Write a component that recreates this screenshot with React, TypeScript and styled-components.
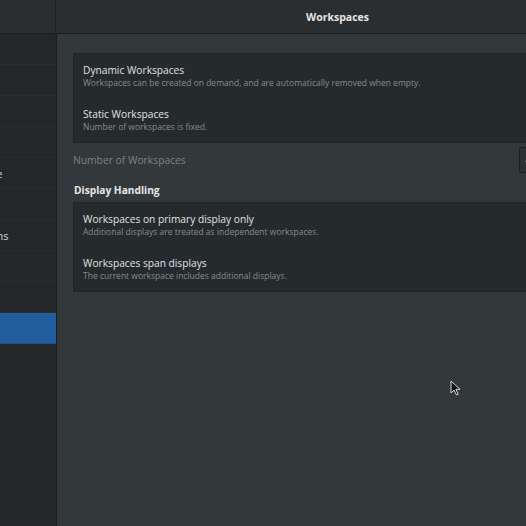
import styled, { createGlobalStyle } from "styled-components";

const GlobalStyle = createGlobalStyle`
  html, body {
    margin: 0;
    padding: 0;
    background-color: #33393b;
    overflow: hidden;
  }
  body {
    font-family: "Open Sans", "Noto Sans", sans-serif;
  }
`;

const Viewport = styled.div`
  position: relative;
  width: 526px;
  height: 526px;
  overflow: hidden;
`;

const Window = styled.div`
  width: 733px;
  height: 526px;
  margin-left: -114px;
  display: flex;
  flex-direction: column;
  background-color: #33393b;
`;

const HeaderBar = styled.header`
  height: 33px;
  display: grid;
  grid-template-columns: 170px 1fr;
  background-color: #2a2e30;
  border-bottom: 1px solid #1c1f20;
`;

const HeaderSide = styled.div`
  border-right: 1px solid #1c1f20;
`;

const HeaderTitle = styled.div`
  display: flex;
  align-items: center;
  justify-content: center;
  color: #e6e6e6;
  font-size: 10.5px;
  font-weight: 700;
`;

const Body = styled.div`
  flex: 1;
  display: flex;
`;

const Sidebar = styled.nav`
  width: 170px;
  background-color: #232729;
  border-right: 1px solid #1c1f20;
  display: flex;
  flex-direction: column;
`;

const SideRow = styled.div<{ $active?: boolean }>`
  height: 30px;
  display: flex;
  align-items: center;
  padding-left: 19px;
  font-size: 11px;
  color: ${(p) => (p.$active ? "#ffffff" : "#d6d6d6")};
  background-color: ${(p) => (p.$active ? "#215d9c" : "transparent")};
  border-bottom: 1px solid ${(p) => (p.$active ? "#1d5289" : "#292d2f")};
  white-space: nowrap;
`;

const Main = styled.main`
  flex: 1;
  padding: 19px 16px;
  display: flex;
  flex-direction: column;
`;

const Card = styled.div`
  background-color: #252a2c;
  border: 1px solid #202426;
  display: flex;
  flex-direction: column;
`;

const Option = styled.div`
  height: 44px;
  padding: 0 9px;
  display: flex;
  flex-direction: column;
  justify-content: center;
  gap: 1px;
`;

const OptionTitle = styled.div`
  color: #e2e2e2;
  font-size: 10.2px;
  line-height: 13px;
`;

const OptionHint = styled.div`
  color: #868b8d;
  font-size: 8.5px;
  line-height: 10px;
`;

const NumberRow = styled.div`
  height: 26px;
  margin-top: 4px;
  display: flex;
  align-items: center;
  justify-content: space-between;
`;

const DimLabel = styled.span`
  color: #7c8183;
  font-size: 10.3px;
`;

const Spin = styled.div`
  width: 84px;
  height: 26px;
  border: 1px solid #1c1f20;
  border-radius: 3px;
  background-color: #2d3234;
  display: flex;
  align-items: center;
  padding-left: 5px;
  box-sizing: border-box;
  color: #8d9294;
  font-size: 10px;
`;

const SectionTitle = styled.div`
  margin: 10px 0 5px 1px;
  color: #e8e8e8;
  font-size: 10.2px;
  font-weight: 700;
`;

const Cursor = styled.svg`
  position: absolute;
  left: 450px;
  top: 380px;
`;

const sideItems = [
  "Appearance",
  "Desktop",
  "Extensions",
  "Fonts",
  "Keyboard & Mouse",
  "Power",
  "Startup Applications",
  "Top Bar",
  "Windows",
  "Workspaces",
];

export default function App() {
  return (
    <Viewport>
      <GlobalStyle />
      <Window>
        <HeaderBar>
          <HeaderSide />
          <HeaderTitle>Workspaces</HeaderTitle>
        </HeaderBar>
        <Body>
          <Sidebar>
            {sideItems.map((item) => (
              <SideRow key={item} $active={item === "Workspaces"}>
                {item}
              </SideRow>
            ))}
          </Sidebar>
          <Main>
            <Card>
              <Option>
                <OptionTitle>Dynamic Workspaces</OptionTitle>
                <OptionHint>
                  Workspaces can be created on demand, and are automatically
                  removed when empty.
                </OptionHint>
              </Option>
              <Option>
                <OptionTitle>Static Workspaces</OptionTitle>
                <OptionHint>Number of workspaces is fixed.</OptionHint>
              </Option>
            </Card>
            <NumberRow>
              <DimLabel>Number of Workspaces</DimLabel>
              <Spin>4</Spin>
            </NumberRow>
            <SectionTitle>Display Handling</SectionTitle>
            <Card>
              <Option>
                <OptionTitle>Workspaces on primary display only</OptionTitle>
                <OptionHint>
                  Additional displays are treated as independent workspaces.
                </OptionHint>
              </Option>
              <Option>
                <OptionTitle>Workspaces span displays</OptionTitle>
                <OptionHint>
                  The current workspace includes additional displays.
                </OptionHint>
              </Option>
            </Card>
          </Main>
        </Body>
      </Window>
      <Cursor width="11" height="16" viewBox="0 0 11 16">
        <path
          d="M1 1 L1 13 L4 10 L6.5 15 L8.3 14.2 L5.9 9.3 L10 9.3 Z"
          fill="#111"
          stroke="#d8d8d8"
          strokeWidth="1"
        />
      </Cursor>
    </Viewport>
  );
}
